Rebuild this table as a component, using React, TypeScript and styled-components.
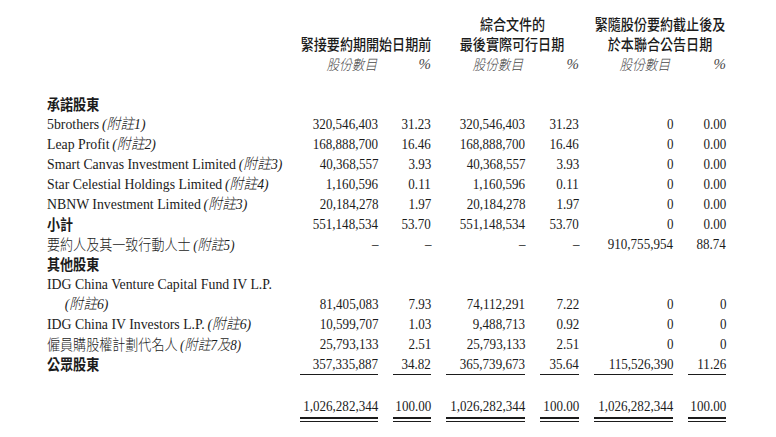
import { FunctionComponent } from "react";
import styled, { createGlobalStyle } from "styled-components";

const GlobalStyle = createGlobalStyle`
  html, body {
    margin: 0;
    padding: 0;
    background: #ffffff;
  }
  body {
    color: #1b1b1b;
    font-family: "Liberation Serif", "Noto Sans CJK TC", serif;
  }
`;

const COLUMNS = "238px 78px 38px 79px 39px 79px 38px";

const Page = styled.div`
  width: 776px;
  height: 437px;
  box-sizing: border-box;
  padding: 14px 0 0 47px;
`;

// the print face is a condensed one: set it larger and narrow it
const Squeeze = styled.span<{ $origin?: "left" | "right" | "center"; $scale?: number }>`
  display: inline-block;
  white-space: nowrap;
  transform: scaleX(${(p) => p.$scale ?? 0.87});
  transform-origin: ${(p) => p.$origin ?? "left"} center;
`;

const HeaderGrid = styled.div`
  display: grid;
  grid-template-columns: ${COLUMNS};
  grid-template-rows: 20px 20px 20px;
  column-gap: 15px;
  margin-bottom: 20px;
`;

const GroupTitle = styled.div<{ $col: number; $lines: number }>`
  grid-column: ${(p) => p.$col} / span 2;
  grid-row: ${(p) => 3 - p.$lines} / span ${(p) => p.$lines};
  display: flex;
  flex-direction: column;
  align-items: center;
  font-family: "Noto Sans CJK TC", sans-serif;
  font-weight: 500;
  font-size: 15px;
  line-height: 20px;
  white-space: nowrap;
  color: #1b1b1b;
`;

const SubHead = styled.div<{ $col: number; $pad?: number }>`
  grid-column: ${(p) => p.$col};
  grid-row: 3;
  display: flex;
  justify-content: flex-end;
  padding-right: ${(p) => p.$pad ?? 0}px;
  font-family: "Noto Sans CJK TC", sans-serif;
  font-style: italic;
  font-weight: 300;
  font-size: 14.5px;
  line-height: 20px;
  color: #4a4a4a;
  white-space: nowrap;
`;

const Percent = styled.span`
  font-family: "Liberation Serif", serif;
  font-style: italic;
  font-size: 15px;
  color: #4a4a4a;
`;

const Row = styled.div<{ $total?: boolean }>`
  display: grid;
  grid-template-columns: ${COLUMNS};
  column-gap: 15px;
  height: 20px;
  margin-top: ${(p) => (p.$total ? "22px" : "0")};
  font-size: 15px;
  line-height: 20px;
`;

const Label = styled.div<{ $indent?: boolean; $section?: boolean; $cjk?: boolean }>`
  padding-left: ${(p) => (p.$indent ? "15px" : "0")};
  white-space: nowrap;
  font-family: ${(p) =>
    p.$section || p.$cjk
      ? `"Noto Sans CJK TC", sans-serif`
      : `"Liberation Serif", "Noto Sans CJK TC", serif`};
  font-weight: ${(p) => (p.$section ? 700 : p.$cjk ? 300 : 400)};
  font-size: 15px;
`;

const Note = styled.span`
  font-family: "Liberation Serif", "Noto Sans CJK TC", serif;
  font-style: italic;
  font-weight: 300;
  margin-left: 3px;
`;

const Cell = styled.div<{ $rule?: "single" | "double" }>`
  display: flex;
  justify-content: flex-end;
  white-space: nowrap;
  font-family: "Liberation Serif", serif;
  box-sizing: border-box;
  border-bottom: ${(p) =>
    p.$rule === "single"
      ? "1px solid #1b1b1b"
      : p.$rule === "double"
      ? "2px solid #1b1b1b"
      : "none"};
  box-shadow: ${(p) =>
    p.$rule === "double" ? "0 2px 0 #ffffff, 0 3px 0 #1b1b1b" : "none"};
  height: ${(p) => (p.$rule === "double" ? "23px" : p.$rule ? "21px" : "20px")};
`;

type RowData = {
  label: string;
  note?: string;
  section?: boolean;
  cjk?: boolean;
  indent?: boolean;
  values?: string[];
  rule?: "single" | "double";
};

const rows: RowData[] = [
  { label: "承諾股東", section: true },
  { label: "5brothers", note: "附註1", values: ["320,546,403", "31.23", "320,546,403", "31.23", "0", "0.00"] },
  { label: "Leap Profit", note: "附註2", values: ["168,888,700", "16.46", "168,888,700", "16.46", "0", "0.00"] },
  { label: "Smart Canvas Investment Limited", note: "附註3", values: ["40,368,557", "3.93", "40,368,557", "3.93", "0", "0.00"] },
  { label: "Star Celestial Holdings Limited", note: "附註4", values: ["1,160,596", "0.11", "1,160,596", "0.11", "0", "0.00"] },
  { label: "NBNW Investment Limited", note: "附註3", values: ["20,184,278", "1.97", "20,184,278", "1.97", "0", "0.00"] },
  { label: "小計", section: true, values: ["551,148,534", "53.70", "551,148,534", "53.70", "0", "0.00"] },
  { label: "要約人及其一致行動人士", cjk: true, note: "附註5", values: ["–", "–", "–", "–", "910,755,954", "88.74"] },
  { label: "其他股東", section: true },
  { label: "IDG China Venture Capital Fund IV L.P." },
  { label: "", indent: true, note: "附註6", values: ["81,405,083", "7.93", "74,112,291", "7.22", "0", "0"] },
  { label: "IDG China IV Investors L.P.", note: "附註6", values: ["10,599,707", "1.03", "9,488,713", "0.92", "0", "0"] },
  { label: "僱員購股權計劃代名人", cjk: true, note: "附註7及8", values: ["25,793,133", "2.51", "25,793,133", "2.51", "0", "0"] },
  { label: "公眾股東", section: true, rule: "single", values: ["357,335,887", "34.82", "365,739,673", "35.64", "115,526,390", "11.26"] },
];

const totals = ["1,026,282,344", "100.00", "1,026,282,344", "100.00", "1,026,282,344", "100.00"];

const TableRow: FunctionComponent<{ row: RowData }> = ({ row }) => (
  <Row>
    <Label $indent={row.indent} $section={row.section} $cjk={row.cjk}>
      <Squeeze $scale={row.section || row.cjk ? 0.87 : 0.92}>
        {row.label}
        {row.note && <Note>({row.note})</Note>}
      </Squeeze>
    </Label>
    {row.values?.map((v, i) => (
      <Cell key={i} $rule={row.rule}>
        <Squeeze $origin="right">{v}</Squeeze>
      </Cell>
    ))}
  </Row>
);

const App: FunctionComponent = () => (
  <>
    <GlobalStyle />
    <Page>
      <HeaderGrid>
        <GroupTitle $col={2} $lines={1}>
          <Squeeze $origin="center">緊接要約期開始日期前</Squeeze>
        </GroupTitle>
        <GroupTitle $col={4} $lines={2}>
          <Squeeze $origin="center">綜合文件的</Squeeze>
          <Squeeze $origin="center">最後實際可行日期</Squeeze>
        </GroupTitle>
        <GroupTitle $col={6} $lines={2}>
          <Squeeze $origin="center">緊隨股份要約截止後及</Squeeze>
          <Squeeze $origin="center">於本聯合公告日期</Squeeze>
        </GroupTitle>
        <SubHead $col={2} $pad={1}>
          <Squeeze $origin="right">股份數目</Squeeze>
        </SubHead>
        <SubHead $col={3}>
          <Percent>%</Percent>
        </SubHead>
        <SubHead $col={4} $pad={2}>
          <Squeeze $origin="right">股份數目</Squeeze>
        </SubHead>
        <SubHead $col={5}>
          <Percent>%</Percent>
        </SubHead>
        <SubHead $col={6} $pad={3}>
          <Squeeze $origin="right">股份數目</Squeeze>
        </SubHead>
        <SubHead $col={7}>
          <Percent>%</Percent>
        </SubHead>
      </HeaderGrid>
      {rows.map((row, i) => (
        <TableRow key={i} row={row} />
      ))}
      <Row $total>
        <Label />
        {totals.map((v, i) => (
          <Cell key={i} $rule="double">
            <Squeeze $origin="right">{v}</Squeeze>
          </Cell>
        ))}
      </Row>
    </Page>
  </>
);

export default App;
